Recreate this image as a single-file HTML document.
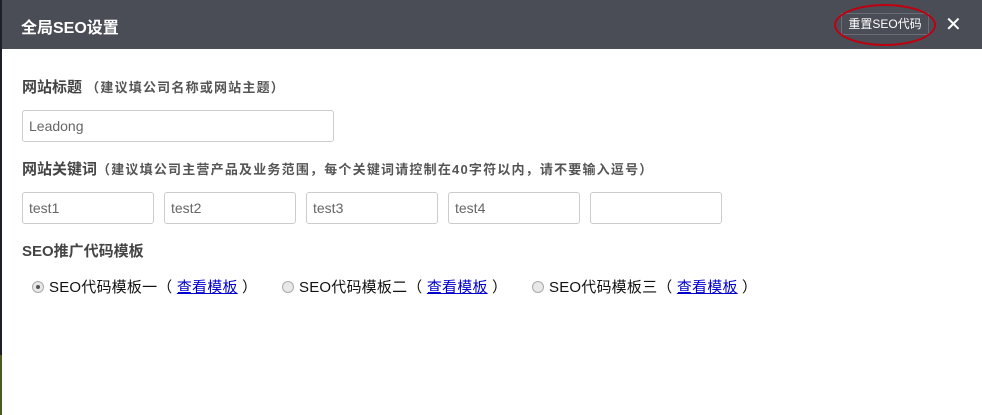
<!DOCTYPE html>
<html><head><meta charset="utf-8"><style>
*{margin:0;padding:0;box-sizing:border-box}
body{width:982px;height:415px;background:#fff;position:relative;overflow:hidden;font-family:"Liberation Sans","Noto Sans CJK SC",sans-serif}
.lstrip{position:absolute;left:0;top:0;width:2px;height:355px;background:#1d1f26}
.lstrip2{position:absolute;left:0;top:355px;width:2px;height:60px;background:#4b5a1e}
.hd{position:absolute;left:2px;top:0;width:980px;height:49px;background:#4a4d55}
.t{position:absolute;left:21px;top:14px;color:#fff;font-size:16px;font-weight:bold}
.btn{position:absolute;left:841px;top:13px;width:88px;height:22px;border:1px solid #6a6d75;color:#fff;font-size:12px;line-height:20px;text-align:center}
.ell{position:absolute;left:834px;top:4px;width:102px;height:42px;border:2px solid #c00010;border-radius:50%}
.x{position:absolute;left:945px;top:12px;color:#fff;font-size:20px}
.lab{position:absolute;left:22px;font-size:15px;font-weight:bold;color:#444}
.lab small{font-size:13px;color:#555;letter-spacing:1.2px}
.in{position:absolute;height:32px;border:1px solid #ccc;border-radius:3px;font-size:14px;color:#666;padding-left:6px;line-height:30px}
.r{position:absolute;top:276px;font-size:15px;color:#111;letter-spacing:0.2px}
.r i{display:inline-block;width:12px;height:12px;border:1px solid #aaa;border-radius:50%;background:#e8e8e8;vertical-align:-1px;margin-right:5px;position:relative}
.r i.on:after{content:"";position:absolute;left:3px;top:3px;width:4px;height:4px;border-radius:50%;background:#555}
.r a{color:#00c;text-decoration:underline}
</style></head><body>
<div class="lstrip"></div><div class="lstrip2"></div>
<div class="hd"></div>
<div class="t">全局SEO设置</div>
<div class="btn">重置SEO代码</div>
<div class="ell"></div>
<div class="x">✕</div>
<div class="lab" style="top:76px">网站标题 <small>（建议填公司名称或网站主题）</small></div>
<div class="in" style="left:22px;top:110px;width:312px">Leadong</div>
<div class="lab" style="top:158px">网站关键词<small>（建议填公司主营产品及业务范围，每个关键词请控制在40字符以内，请不要输入逗号）</small></div>
<div class="in" style="left:22px;top:192px;width:132px">test1</div>
<div class="in" style="left:164px;top:192px;width:132px">test2</div>
<div class="in" style="left:306px;top:192px;width:132px">test3</div>
<div class="in" style="left:448px;top:192px;width:132px">test4</div>
<div class="in" style="left:590px;top:192px;width:132px"></div>
<div class="lab" style="top:240px">SEO推广代码模板</div>
<div class="r" style="left:32px"><i class="on"></i>SEO代码模板一（ <a>查看模板</a> ）</div>
<div class="r" style="left:282px"><i></i>SEO代码模板二（ <a>查看模板</a> ）</div>
<div class="r" style="left:532px"><i></i>SEO代码模板三（ <a>查看模板</a> ）</div>
</body></html>
